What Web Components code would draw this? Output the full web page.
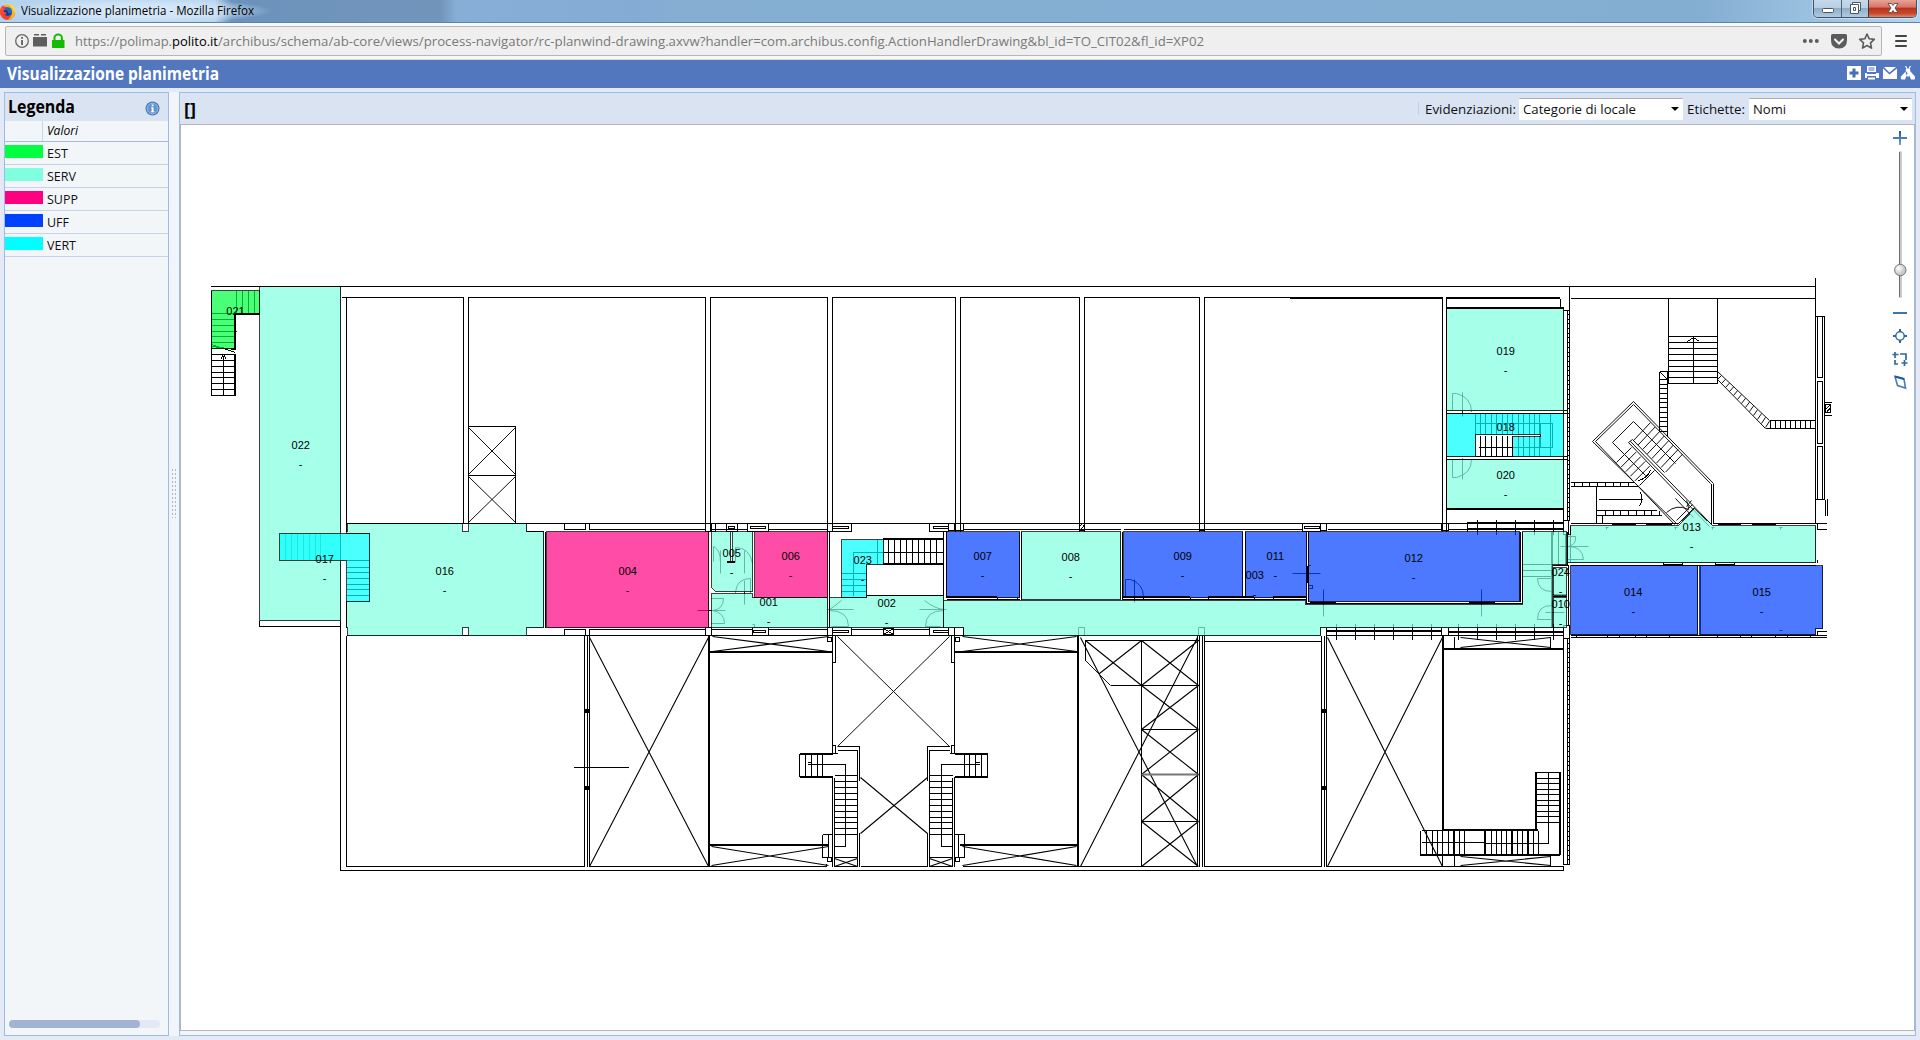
<!DOCTYPE html>
<html lang="it">
<head>
<meta charset="utf-8">
<title>Visualizzazione planimetria</title>
<style>
html,body{margin:0;height:100%;overflow:hidden}
body{font-family:"Open Sans","Noto Sans",sans-serif;background:#e3eaf6}
</style>
</head>
<body>
<plan-window></plan-window>
<script>
function define(name, html, init) {
  customElements.define(name, class extends HTMLElement {
    connectedCallback() {
      if (this.shadowRoot) return;
      const root = this.attachShadow({ mode: 'open' });
      root.innerHTML = html;
      if (init) init(this, root);
    }
  });
}

/* Text squeezed or stretched to a given width */
define('fit-text', `<style>
:host{display:inline-block;white-space:pre;flex:none}
span{display:inline-block;transform-origin:0 50%}
</style><span><slot></slot></span>`, (el, root) => {
  const w = +el.getAttribute('w');
  const s = root.querySelector('span');
  el.style.width = w + 'px';
  s.style.transform = 'scaleX(' + w / s.getBoundingClientRect().width + ')';
});

define('title-bar', `<style>
:host{display:flex;height:22px;border-bottom:1px solid #5a84ad;justify-content:space-between;
 background:
 radial-gradient(ellipse 135px 13px at 137px 11px,#dcecfb 0,#d2e6f8cc 60%,#c6ddf200 100%),
 linear-gradient(90deg,#b4d2ec 0,#b9d5ee 215px,#6a92bd 232px,#6f94bc 300px,#7194bb 440px,#87aed6 456px,#84abd4 640px,#86aed3 680px,#84aed3 1200px,#84add2 1700px,#a6cae6 1860px,#b5d6ee 100%)}
.name{display:flex;align-items:center;gap:5px;font-size:12px;line-height:18px;color:#000}
.name svg{margin-top:1px}
fit-text{margin-top:-1px}
.buttons{display:flex;height:17px;width:102px;margin-right:3px;border:1px solid #3e5268;border-top:0;border-radius:0 0 5px 5px;overflow:hidden;box-shadow:0 0 0 1px #ffffff66}
.buttons div{display:flex;align-items:center;justify-content:center}
.a{width:27px;background:linear-gradient(#c6d9ea 0,#b9cfe3 45%,#8fadc9 50%,#b0cbe2);border-right:1px solid #4d6277}
.b{width:26px;background:linear-gradient(#c6d9ea 0,#b9cfe3 45%,#8fadc9 50%,#b0cbe2);border-right:1px solid #4d3237}
.c{flex:1;background:linear-gradient(#e7a497 0,#d5796b 40%,#b9331f 50%,#c94a2e 80%,#e2876b)}
</style>
<div class="name">
<svg width="16" height="18" viewBox="0 0 16 18"><circle cx="7.500" cy="9.500" r="7.500" fill="#f0412f"/><path d="M3 3C6 1 13 1 15 7c1 5-3 10-8 10 4-2 6-6 4-10C9 4 6 4 3 3z" fill="#ffb51c"/><path d="M9 1c4 1 7 4 6 9l-2-4z" fill="#ffe13b"/><circle cx="7.800" cy="8.500" r="4.300" fill="#2169c9"/><path d="M3 8c2-2 5-1 5 1s3 2 4 0c0 4-7 6-9-1z" fill="#123b93"/><path d="M0 8c0-3 2-5 3-6 0 2 0 3 2 4-2 1-2 2-1 3 2 0 3 1 2 2s-3 0-4-1 0 4 4 5C2 15 0 12 0 8z" fill="#ff4a35"/></svg>
<fit-text w="233">Visualizzazione planimetria - Mozilla Firefox</fit-text></div>
<div class="buttons"><div class="a"><svg width="14" height="17"><rect x="1.500" y="8.500" width="11" height="4" rx="1" fill="#fff" stroke="#4a5561"/></svg></div>
<div class="b"><svg width="14" height="17"><path d="M4.500 2.500h8v8h-2v3h-8v-9h2z" fill="#fff" stroke="#4a5561"/><path d="M4.500 4.500h6v6M5.500 7.500h2v3h-2z" fill="none" stroke="#4a5561"/></svg></div>
<div class="c"><svg width="16" height="17"><path d="M3 3.500h3.500l1.500 2 1.500-2H13L10 8l3 4.500H9.500L8 10.500l-1.500 2H3L6 8z" fill="#fff" stroke="#5b4a4d" stroke-width=".9"/></svg></div></div>`);

define('url-bar', `<style>
:host{display:flex;box-sizing:border-box;height:37px;background:#f8f8f8;padding:3px 0 0 5px;border-bottom:1px solid #d8d8d8}
.box{box-sizing:border-box;width:1877px;height:30px;border:1px solid #b7b7b7;background:#efefef;border-radius:2px;display:flex;align-items:center}
.l{width:69px;height:28px}
.url{display:flex;font-size:13.500px;color:#797979}
.url b{font-weight:400;color:#000}
.r{margin-left:auto}
.menu{display:flex;flex-direction:column;gap:3px;margin:9px 0 0 13px}
.menu i{display:block;width:12px;height:2px;background:#444;border-radius:1px}
</style>
<div class="box"><svg class="l" viewBox="6 27 69 28">
<circle cx="22" cy="41" r="6.300" fill="none" stroke="#666" stroke-width="1.300"/><path d="M21.200 40h1.700v5h-1.700zM21.200 37h1.700v1.800h-1.700z" fill="#555"/>
<path d="M33 37h14v9.500h-14zM34 34h5v1.500h-5zM41 34h5v1.500h-5z" fill="#5e5e5e"/>
<path d="M52 40h12.500v8H52z" fill="#12bc00"/><path d="M54.500 40v-2.300a3.700 3.200 0 0 1 7.400 0V40" fill="none" stroke="#12bc00" stroke-width="2"/></svg>
<div class="url"><fit-text w="97">https://polimap.</fit-text><b><fit-text w="46">polito.it</fit-text></b><fit-text w="986">/archibus/schema/ab-core/views/process-navigator/rc-planwind-drawing.axvw?handler=com.archibus.config.ActionHandlerDrawing&amp;bl_id=TO_CIT02&amp;fl_id=XP02</fit-text></div>
<svg class="r" width="80" height="28" viewBox="1801 27 80 28"><g fill="#5c5c5c"><circle cx="1804.800" cy="41" r="2"/><circle cx="1810.800" cy="41" r="2"/><circle cx="1816.800" cy="41" r="2"/><path d="M1832.500 34h13q1.500 0 1.500 1.500V40q0 8.500-8 8.500t-8-8.500v-4.500q0-1.500 1.500-1.500z"/></g><path d="M1835 39.500l4 4 4-4" fill="none" stroke="#f4f4f4" stroke-width="2" stroke-linecap="round"/><path d="M1867 34l2.200 4.800 5.100.6-3.800 3.500 1 5.200-4.500-2.600-4.500 2.600 1-5.200-3.800-3.500 5.100-.6z" fill="none" stroke="#5c5c5c" stroke-width="1.600" stroke-linejoin="round"/></svg></div>
<div class="menu"><i></i><i></i><i></i></div>`);

define('view-header', `<style>
:host{display:flex;box-sizing:border-box;height:28px;background:#5277bf;color:#fff;align-items:center;justify-content:space-between;padding:0 5px 0 7px;font:700 17px/28px "Open Sans",sans-serif}
</style><fit-text w="212">Visualizzazione planimetria</fit-text>
<svg width="68" height="28" viewBox="1847 60 68 28"><path d="M1847 66h14v14h-14z" fill="#fff"/><path d="M1852.500 68.500h3v3h3v3h-3v3h-3v-3h-3v-3h3z" fill="#4470b6"/>
<g fill="#fff"><path d="M1867 66h9v6h-9zM1865 73h2v1h9v-1h3v5h-3v-2h-9v2h-2zM1868 77.500h7v2h-7z"/><path d="M1883 68.500l6.500 6 7.500-6V79h-14zM1884 67h12l-6.500 5.500z"/><path d="M1906 69h4l.5 3-1.500 4.500h-2l-1.500-4.500zM1906 71l-5 5.500q-1 3 1.500 3h2.500l2.500-6zM1910 71l5 5.500q1 3-1.500 3h-2.500l-2.500-6z"/><path d="M1907.500 69.500l-2-3.500M1908.500 69.500l2-3.500" stroke="#fff" stroke-width="1.200"/></g><path d="M1868.500 68h6M1868.500 70h6" stroke="#5277bf"/></svg>`);

define('legend-panel', `<style>
:host{display:flex;flex-direction:column;box-sizing:border-box;width:165px;border:1px solid #9dbbe9;background:#f2f6f9}
.head{display:flex;height:28px;background:#dae3f1;align-items:center;justify-content:space-between;padding:0 8px 0 3px;font-weight:700;font-size:17px;line-height:28px}
.head svg{margin-top:3px}
.cols{display:flex;height:20px;border-bottom:1px solid #a3bce0;font:italic 12px/20px "Open Sans"}
.cols i{width:37px;border-right:1px solid #c5d5eb;margin-right:4px}
.row{display:flex;box-sizing:border-box;height:23px;border-bottom:1px solid #c4d3ea;font-size:12px;line-height:23px;color:#111}
.row i{width:38px;height:13px;margin:3px 4px 0 0}
.scroll{height:8px;width:151px;background:#e3eaf6;border-radius:4px;margin:auto 0 7px 4px}
.scroll div{height:8px;width:131px;background:#a1b4d3;border-radius:4px}
</style>
<div class="head"><fit-text w="67">Legenda</fit-text><svg width="15" height="15"><circle cx="7.500" cy="7.500" r="7" fill="#4577b5"/><circle cx="7.500" cy="7.500" r="5.400" fill="#6494cc" stroke="#a9c6e8" stroke-width=".9"/><path d="M6.700 3.500h1.800v1.700H6.700zM6.200 6.300h2.300v4h.8v1H6v-1h.7v-3h-.5z" fill="#fff"/></svg></div>
<div class="cols"><i></i><fit-text w="31">Valori</fit-text></div>
<div class="row"><i style="background:#00ff40"></i><fit-text w="21">EST</fit-text></div>
<div class="row"><i style="background:#80ffdf"></i><fit-text w="29">SERV</fit-text></div>
<div class="row"><i style="background:#ff0080"></i><fit-text w="31">SUPP</fit-text></div>
<div class="row"><i style="background:#0040ff"></i><fit-text w="22">UFF</fit-text></div>
<div class="row"><i style="background:#00ffff"></i><fit-text w="29">VERT</fit-text></div>
<div class="scroll"><div></div></div>`);

define('pane-splitter', `<style>
:host{display:flex;width:10px;background:#f1f5f9;align-items:center;justify-content:center}
div{width:6px;height:50px;margin-top:-142px;background:radial-gradient(circle,#b3b9c4 .8px,transparent 1px) 0 0/3px 4px}
</style><div></div>`);

define('drop-down', `<style>
:host{display:flex;box-sizing:border-box;width:163px;height:22px;background:#fff;border-top:1px solid #a9adb5;align-items:center;justify-content:space-between;padding:0 4px;border-radius:1px}
i{border:4px solid transparent;border-top-color:#000;border-bottom:0}
</style><slot></slot><i></i>`);

/* Repeated strokes: v = vertical lines at xs, h = horizontal lines at ys */
const v = (xs, a, b) => xs.map(x => `M${x} ${a}V${b}`).join('');
const h = (ys, a, b) => ys.map(y => `M${a} ${y}H${b}`).join('');
const box = (a, b, c, d) => `M${a} ${b}H${c}V${d}H${a}z`;
const cross = (a, b, c, d) => `M${a} ${b}L${c} ${d}M${c} ${b}L${a} ${d}`;
const range = (a, b, s) => { const r = []; for (let i = a; i <= b; i += s) r.push(Math.round(i)); return r; };
const mirror = d => `<g transform="translate(1786 0) scale(-1 1)">${d}</g>`;

const walls = [
  'M210 286H1815M341 297H463V523M346 297V523M259 620V626H340M340 286V870H1563V866M346 523V531M346 635V866M346 601V627',
  'M468 523V297H705V531M710 531V297H827V531M832 523V297H955V531M960 531V297H1079V531M1084 531V297H1199V531M1204 531V297H1442V531M1446 531V298',
  box(468, 426, 515, 475), box(468, 475, 515, 523),
  /* corridor walls */
  'M346 523H1467M346 635H1320M526 523V531H543M526 627H543V531M545 531V627',
  box(564, 523, 585, 529), box(589, 523, 705, 529), box(564, 629, 585, 635), box(589, 629, 705, 635),
  box(705, 523, 711, 531), box(705, 627, 711, 635), 'M708 531V627M711 529H747M768 529H827M711 629H752M768 629H827M851 629H883M893 629H929',
  box(711, 523, 715, 531), box(726, 523, 737, 531), box(728, 526, 734, 528), box(747, 523, 768, 531), box(750, 526, 765, 528),
  box(752, 627, 768, 635), box(753, 630, 765, 632), box(832, 523, 851, 531), box(832, 526, 848, 528), box(832, 627, 851, 635), box(832, 630, 848, 632),
  box(929, 523, 948, 531), box(933, 526, 948, 528), box(929, 627, 948, 635), box(933, 630, 948, 632), box(883, 628, 893, 634), cross(883, 628, 893, 634),
  box(827, 523, 832, 531), box(827, 627, 832, 635), box(948, 523, 954, 530), box(954, 523, 963, 530), box(948, 627, 954, 635), box(954, 627, 963, 635),
  'M827 531V627M829 531V627M943 531V600M946 531V597',
  'M963 529H1120M1123 529H1301M1327 529H1441M1021 531V599M1019 531V597M1120 531V599M1122 531V599M1242 531V597M1245 531V597M1306 531V597M1308 531V601',
  box(1079, 523, 1084, 530), 'M1080 530l4-6M1079 526l3-3', box(1199, 523, 1204, 530), box(1302, 523, 1320, 531), box(1304, 526, 1319, 528), box(1320, 523, 1326, 530), box(1441, 523, 1448, 530),
  'M946 599H1019M1122 599H1305M997 597V599M1017 597V599M1190 597V599M1208 597V599M1254 597V599M1273 597V599M1143 597V599M1306 597V603H1522V531M1520 531V601M1310 565H1308M1307 565V582M1308 585H1312V588H1308',
  /* stair 023 */
  box(883, 539, 943, 564), v([888, 894, 900, 906, 912, 918, 924, 930, 936], 539, 564), 'M853 595V552H943M866 564V595H943M877 539V564', h([573, 579, 585, 591], 841, 866),
  /* stair 021 */
  v([236, 242, 248, 254], 290, 314), h([313, 319, 325, 331, 336, 342, 348], 211, 234), h([354, 360, 366, 372, 377, 383, 389, 395], 211, 235), 'M211 290V395M223 355V395M220 359L223 354L226 359M211 344L235 352M212 346L234 349',
  v([285, 291, 297, 303, 309, 315, 320, 340], 533, 560), h([560, 567, 572, 578, 584, 589, 595], 346, 369),
  /* north-east rooms */
  'M1560 298V308M1446 410H1567M1446 413H1567M1446 456H1567M1446 459H1567M1563 308V520M1567 310V520M1569 286V520M1563 310H1569M1570 298H1815M1815 277V523',
  h(range(314, 518, 4.700), 1567, 1569), 'M1475 456V413M1475 423H1500M1475 423H1552V447H1535M1540 423V447', v([1480, 1485, 1491, 1496, 1502, 1507, 1512, 1518, 1523, 1529, 1534, 1539, 1550], 413, 456), 'M1478 447H1512M1512 447H1539',
  v([1477, 1496, 1515, 1534, 1553], 519, 534), 'M1467 522V531M1448 529H1563M1467 528H1563',
  'M1551 531V627M1558 531V564M1552 531V564M1522 564H1552M1522 570H1552M1522 576H1552M1552 565H1568M1552 594H1566M1552 596H1566M1567 531V565M1565 534V565M1568 565V625M1563 520H1568V534H1563z',
  /* stairs and ramps, east hall */
  'M1668 298V383M1717 298V383', h([336, 342, 348, 354, 360, 366, 371, 377, 383], 1668, 1717), 'M1693 337V383M1687 341L1693 337L1699 341',
  'M1659 371V431M1667 371V436M1659 371H1667M1660 372L1667 379', h(range(379, 433, 4.700), 1659, 1667),
  'M1769 420H1815M1765 428H1815', v(range(1770, 1812, 5), 420, 428),
  'M1570 482H1633M1570 486H1637', v(range(1574, 1632, 7.700), 482, 486), 'M1596 486V523M1596 510H1656M1596 515H1661', v(range(1605, 1660, 7.700), 510, 515), 'M1598 499H1642M1602 515V523M1640 492Q1643 499 1639 506M1650 470Q1646 478 1638 480',
  'M1570 523H1678M1713 523H1826M1713 483V523M1711 483V523M1570 525V562H1815V525M1570 565H1815M1697 565V634M1700 565V634',
  box(1663, 562, 1682, 564), box(1715, 562, 1734, 564), box(1612, 523, 1635, 524), box(1646, 523, 1671, 524), box(1718, 523, 1740, 524), box(1752, 523, 1775, 524),
  'M1570 635H1826M1570 637H1826', v([1576, 1607, 1619, 1635, 1646, 1669, 1717, 1740, 1751, 1775, 1787, 1810], 635, 637),
  'M1815 316H1824V499H1815', box(1817, 316, 1822, 377), box(1817, 381, 1822, 443), box(1817, 446, 1822, 499), box(1825, 404, 1830, 412), 'M1825 409l5-5M1826 412l4-5M1823 402h8M1823 415h8M1825 499V515M1827 498V515M1826 523H1817V529H1826M1817 559V562M1826 631H1817V635H1826',
  /* south wing */
  v([584, 587, 589], 635, 866), 'M573 767H628M346 866H584M589 866H826V863M832 777V866M860 866H927M962 866H1197M1204 866H1321M1326 866H1563',
  v([1197, 1199, 1202, 1204, 1321, 1324, 1326], 635, 866), 'M1204 641H1321M1085 660V640H1198M1110 685H1198M1141 640V866M1141 729H1197M1141 821H1197',
  'M1320 635V627H1326V635M1441 635V627H1448V635M1326 627H1563M1326 635H1563M1448 635V628', v([1336, 1355, 1374, 1393, 1412, 1431, 1458, 1477, 1496, 1515, 1534, 1553], 623, 639),
  'M1454 636V649M1550 636V649M1563 625H1569V638H1563zM1563 638V864H1569V638M1567 638V864', h(range(643, 862, 4.700), 1567, 1569),
  /* south-east stair */
  'M1420 830V855M1421 842H1485M1485 843H1548V771M1442 855V866M1454 855V866M1550 855V866M1536 772H1560', v([1426, 1432, 1437, 1442, 1448, 1459, 1464, 1491, 1496, 1501, 1506, 1517, 1522, 1533, 1538], 830, 855), h([778, 783, 789, 794, 800, 805, 811, 816, 822], 1536, 1560), 'M1421 830H1443'
].join('');

const thick = 'M235 314H259M235 314V350M235 354V395M1290 298H1442M1446 298H1560M1446 308H1564M1446 509H1564M727 562H735M883 539H943M883 564H943M946 597H997M1122 597H1190M1208 597H1254M1273 597H1306M1310 603H1336M1469 603H1495M709 635V866M709 652H832M709 845H828M954 652H1078M960 845H1078M1078 635V866M1443 635V830M1443 649H1563M1326 631H1441M1448 632H1563M1467 523H1563M1467 529H1563M1443 830H1538M1421 855H1560M1560 772V855M1536 772V830M1454 830V855M1485 830V855M1512 830V855M1528 830V855M584 710H589M584 712H589M584 787H589M584 789H589M1321 710H1326M1321 712H1326M1321 787H1326M1321 789H1326';

/* one of the two symmetric stair towers */
const tower = `<path d="M832 635V753M835 635V662H832M${box(827, 637, 831, 641).slice(1)}M799 753H837M799 776H832${v([799, 805, 811, 817, 822], 753, 776)}M807 764H845V846H834M807 762h4M832 745H835V753M837 746H859V780M837 750H857V866M859 832V866M834 777V866M832 776V866${h([775, 781, 787, 793, 799, 805, 811, 817, 822, 828, 834], 834, 857)}${box(834, 857, 857, 866)}M822 834H832M822 834V857H832M828 834V857M827 857h4v4h-4z"/><path stroke-width="2" d="M799 753H832M799 776H832"/>`;

const diagonals = [
  cross(589, 637, 708, 866), cross(1327, 637, 1442, 866), cross(1080, 637, 1197, 866), cross(860, 777, 927, 833),
  cross(712, 636, 828, 651), cross(711, 846, 828, 865), cross(962, 636, 1076, 651), cross(962, 846, 1076, 865),
  cross(1460, 637, 1550, 647), cross(1460, 856, 1550, 865), cross(834, 858, 857, 866), cross(929, 858, 952, 866),
  cross(1141, 640, 1198, 685), cross(1141, 685, 1198, 729), cross(1141, 729, 1198, 774), cross(1141, 774, 1198, 821), cross(1141, 821, 1198, 866),
  'M1085 640L1141 685M1099 673L1141 640'
].join('');

/* the slanted double flight and the sloping ramp */
let slanted = cross(468, 427, 515, 474) + cross(468, 476, 515, 522) + cross(837, 636, 949, 746) + 'M1085 660L1110 685'
  + 'M1677 524L1592 441L1633 401L1713 483M1674 524L1595 441L1633 404L1710 483M1711 524L1630 441M1709 526L1628 442M1664 472L1632 439M1633 421L1612 442L1645 475M1633 421L1675 463M1678 523L1694 507M1676 520L1692 504M1717 371L1769 420M1717 379L1765 428M1675 498L1693 517M1666 512Q1676 503 1688 509Q1688 504 1686 500M1691 500L1686 506M1628 442L1632 439';
for (let i = 0; i < 8; i++) slanted += `M${1633 + i * 4.600} ${440 + i * 4.500}L${1650 + i * 4.600} ${422 + i * 4.500}`;
for (let i = 0; i < 6; i++) slanted += `M${1616 + i * 4.600} ${462 + i * 4.600}L${1631 + i * 4.600} ${447 + i * 4.600}`;
for (let i = 0; i < 13; i++) slanted += `M${1717 + i * 4} ${379 + i * 4}L${1721 + i * 4} ${375 + i * 3.800}`;

/* door leaves, swings and axes */
const doors = 'M713 561V546Q720 549 720 562M720 550V573M735 562V547Q749 547 752 563M744 550V573M735 592Q736 578 750 578V592M744 580V604M697 610H725M711 598H723Q723 609 712 610Q724 612 724 623H711M828 609H853M829 610Q848 610 848 626H831M829 609Q831 608 841 600M919 609H946M943 610Q925 610 925 626H940M943 609Q934 608 924 600M1125 597V579H1130Q1143 583 1143 597M1134 579V602M1292 573H1320M1323 589V616M1481 589V616M1452 410V393H1456Q1471 397 1471 411M1462 392V416M1452 459V477H1456Q1471 473 1471 459M1462 458V479M1551 578H1537Q1537 591 1552 591M1551 605Q1537 605 1537 619H1551M1545 612H1564M1560 546H1588M1567 536H1575Q1576 544 1568 546Q1582 546 1583 559H1567M1078 635V627H1084V635M1198 635V627H1204V635M752 624H754V627M1605 527h3M1606 527v2M1674 527h3M1675 527v2M1711 527h3M1712 527v2M1779 527h3M1780 527v2M1779 630h3';

const rooms = [
  ['#00ff40', '211,290 259,290 259,314 234,314 234,348 211,348'],
  ['#80ffdf', '259,286 340,286 340,620 259,620'],
  ['#80ffdf', '347,523 462,523 462,531 468,531 468,523 526,523 526,531 543,531 543,627 526,627 526,635 468,635 468,627 462,627 462,635 347,635 347,627 346,627 346,601 369,601 369,533 346,533 346,531 347,531'],
  ['#ff0080', '546,531 708,531 708,627 546,627'],
  ['#80ffdf', '711,531 730,531 730,561 732,561 732,531 752,531 752,591 715,591 711,587'],
  ['#ff0080', '754,531 827,531 827,597 754,597'],
  ['#80ffdf', '711,593 752,593 752,597 827,597 827,627 711,627'],
  ['#00ffff', '841,539 883,539 883,564 866,564 866,597 841,597'],
  ['#80ffdf', '829,597 866,597 866,595 943,595 943,627 829,627'],
  ['#0040ff', '946,531 1019,531 1019,597 946,597'],
  ['#80ffdf', '1021,531 1120,531 1120,599 1021,599'],
  ['#0040ff', '1123,531 1242,531 1242,597 1123,597'],
  ['#0040ff', '1245,531 1306,531 1306,597 1245,597'],
  ['#0040ff', '1308,531 1519,531 1519,601 1308,601'],
  ['#80ffdf', '943,600 1305,600 1305,604 1522,604 1522,531 1566,531 1566,564 1552,564 1552,627 1320,627 1320,635 963,635 963,627 943,627'],
  ['#80ffdf', '1553,567 1566,567 1566,595 1553,595'],
  ['#80ffdf', '1553,597 1566,597 1566,627 1553,627'],
  ['#80ffdf', '1446,308 1563,308 1563,410 1446,410'],
  ['#00ffff', '1446,413 1563,413 1563,456 1512,456 1512,436 1540,436 1540,434 1475,434 1475,456 1446,456'],
  ['#80ffdf', '1446,459 1563,459 1563,508 1446,508'],
  ['#80ffdf', '1570,525 1678,525 1694,508 1712,525 1815,525 1815,562 1567,562 1567,534 1570,534'],
  ['#0040ff', '1570,565 1697,565 1697,634 1570,634'],
  ['#0040ff', '1699,565 1822,565 1822,628 1815,628 1815,634 1699,634']
].map(([c, p]) => `<polygon fill="${c}" points="${p}"/>`).join('')
  + '<polygon fill="#00ffff" points="279,533 369,533 369,601 346,601 346,560 279,560"/>';

const labels = [['021', 235.500, 315], ['022', 300.700, 449], ['017', 324.700, 563], ['016', 444.700, 575], ['004', 627.700, 575], ['005', 731.700, 557], ['006', 790.700, 560], ['001', 768.700, 606], ['002', 886.700, 607], ['023', 862.700, 564], ['007', 982.700, 560], ['008', 1070.700, 561], ['009', 1182.700, 560], ['003', 1254.700, 579], ['011', 1275.300, 560], ['012', 1413.700, 562], ['019', 1505.700, 355], ['018', 1505.700, 431], ['020', 1505.700, 479], ['024', 1560.700, 576], ['010', 1560.700, 608], ['013', 1691.700, 531], ['014', 1633.300, 596], ['015', 1761.700, 596]]
  .map(([t, x, y]) => `<text x="${x}" y="${y}">${t}</text><text x="${x}" y="${y + 19}">-</text>`).join('');

define('floor-plan', `<style>
:host{display:block;width:1733px;height:905px;background:#fff}
svg{display:block}
text{font:11px "Liberation Sans",Arial,sans-serif;text-anchor:middle;fill:#000}
</style><svg width="1733" height="905" viewBox="181 125 1733 905">
<g transform="translate(.5 .5)" fill="none" stroke="#000">
<g shape-rendering="crispEdges"><path d="${walls}"/>${tower}${mirror(tower)}</g>
<path d="${diagonals}" stroke-width="1.100"/><path d="${slanted}" stroke="#111"/>
<path d="M1141 774H1197" stroke="#777" stroke-width="2"/><path d="${doors}" stroke-width=".9"/></g>
<g transform="translate(.5 .5)" fill-opacity=".7" stroke="#000" stroke-opacity=".75" shape-rendering="crispEdges">${rooms}</g>
<path d="M1477 435H1540V436H1477z" fill="#fff"/>
<path d="${thick}" fill="none" stroke="#000" stroke-width="2" shape-rendering="crispEdges"/>
<g>${labels}</g>
<defs><linearGradient id="g" x2="0" y2="1"><stop stop-color="#195a9f"/><stop offset="1" stop-color="#7ba0ca"/></linearGradient><radialGradient id="k" cx=".35" cy=".35"><stop stop-color="#fff"/><stop offset="1" stop-color="#c9c9c9"/></radialGradient></defs>
<path d="M1893 137h6v-6h2v6h6v2h-6v6h-2v-6h-6z" fill="url(#g)"/>
<rect x="1899" y="151" width="3" height="147" rx="1.500" fill="#c9c9c9"/><path d="M1899.500 152V297" stroke="#6b6b6b"/>
<circle cx="1900.300" cy="270" r="5.700" fill="url(#k)" stroke="#777"/>
<path d="M1893 312h14v2h-14z" fill="#3d74b0"/>
<circle cx="1900" cy="336" r="4.200" fill="none" stroke="#3a70ad" stroke-width="1.500"/><path d="M1899 329h2v3h-2zM1899 340h2v3h-2zM1893 335h3v2h-3zM1904 335h3v2h-3z" fill="#2c65a5"/>
<path d="M1895 352v6M1892.500 354.500h6M1900 354h6v6M1895 360v4h3M1904.500 360v6M1901.500 363h6" fill="none" stroke="#3168a7" stroke-width="1.700"/>
<path d="M1895 376.500l9 2.500 1.500 9-8-2.500z" fill="none" stroke="#4c7db4" stroke-width="1.600"/><path d="M1895 376.500l9 2.500" stroke="#1c5ba0" stroke-width="2"/>
</svg>`);

define('drawing-panel', `<style>
:host{display:flex;flex-direction:column;box-sizing:border-box;width:1737px;border:1px solid #9dbbe9;background:#f2f6f9}
.bar{display:flex;height:31px;background:#dae3f1;align-items:center;font-size:13.500px;padding:0 3px 0 4px;color:#111}
.bar b{font-size:17px;color:#000;margin-top:2px}
.sep{margin-left:auto;width:1px;height:13px;background:#b7d0f3;margin-right:6px}
.wide{width:164px}
.paper{border:1px solid #b3b7bd;height:905px;width:1733px}
</style>
<div class="bar"><b><fit-text w="12">[]</fit-text></b><div class="sep"></div>
<fit-text w="91" style="margin-right:3px">Evidenziazioni:</fit-text><drop-down class="wide"><fit-text w="113">Categorie di locale</fit-text></drop-down>
<fit-text w="58" style="margin:0 4px 0 4px">Etichette:</fit-text><drop-down><fit-text w="33">Nomi</fit-text></drop-down></div>
<div class="paper"><floor-plan></floor-plan></div>`);

define('plan-window', `<style>
:host{display:flex;flex-direction:column;width:1920px;height:1040px;overflow:hidden}
.content{display:flex;height:944px;margin:4px 0 4px 4px}
</style><title-bar></title-bar><url-bar></url-bar><view-header></view-header>
<div class="content"><legend-panel></legend-panel><pane-splitter></pane-splitter><drawing-panel></drawing-panel></div>`);
</script>
</body>
</html>
